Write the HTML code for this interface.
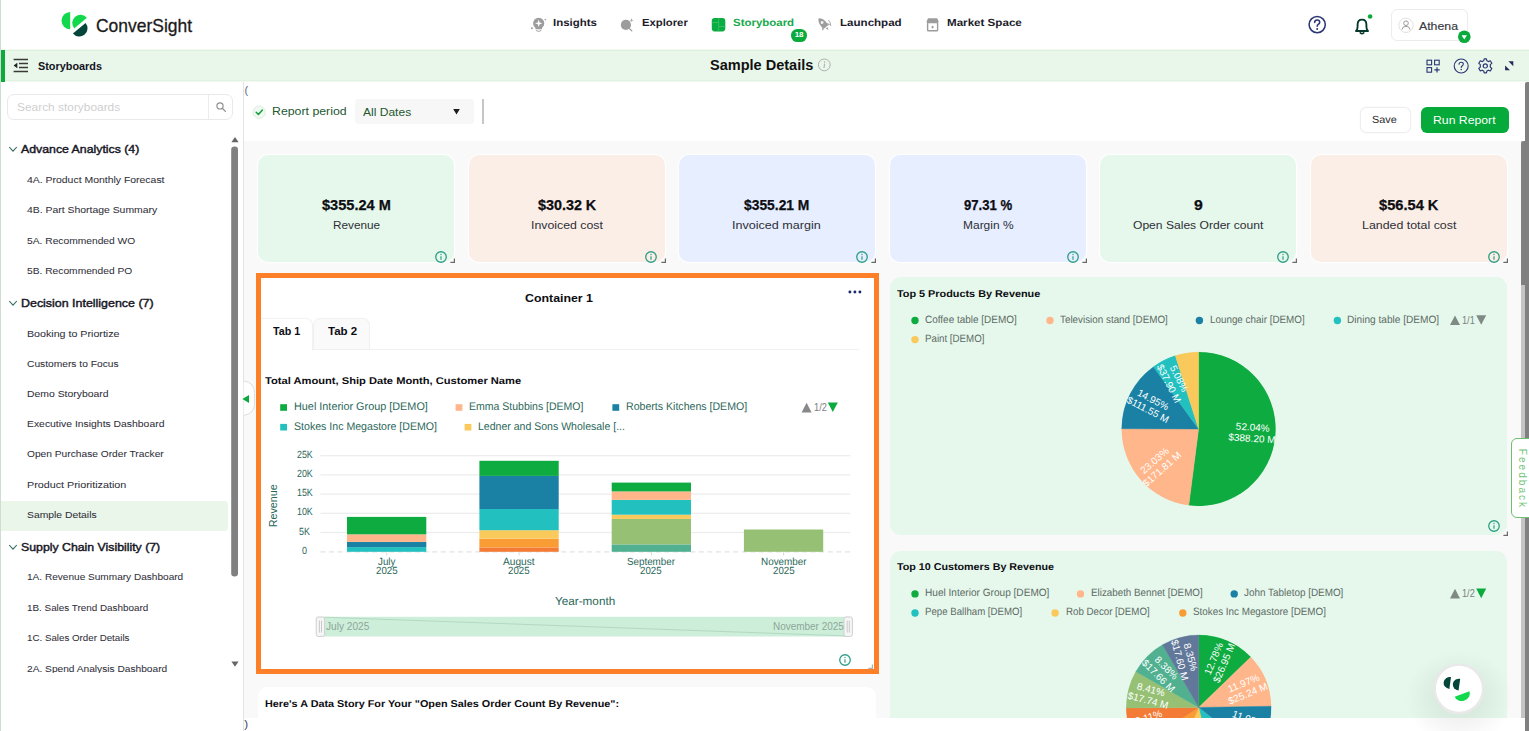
<!DOCTYPE html>
<html><head><meta charset="utf-8"><title>Sample Details</title>
<style>
html,body{margin:0;padding:0;}
body{width:1529px;height:731px;overflow:hidden;background:#fff;font-family:"Liberation Sans",sans-serif;}
#app{position:relative;width:1529px;height:731px;overflow:hidden;background:#fff;}
.t{position:absolute;white-space:nowrap;font-family:"Liberation Sans",sans-serif;}
.a{position:absolute;}
svg{position:absolute;overflow:visible;}

</style></head>
<body>
<div id="app">
<div class="a" style="left:0;top:0;width:1529px;height:50px;background:#fff"></div>
<div class="a" style="left:0;top:49.2px;width:1529px;height:32.6px;background:#f1f9f1"></div>
<div class="a" style="left:0;top:50px;width:1529px;height:31.2px;background:#e9f6ea"></div>
<div class="a" style="left:0;top:50px;width:1529px;height:1px;background:#ddefde"></div>
<div class="a" style="left:0;top:80.1px;width:1529px;height:1px;background:#e1f2e2"></div>
<div class="a" style="left:1px;top:49.8px;width:4px;height:31.8px;background:#0ca93c"></div>
<svg style="left:55px;top:5px" width="40" height="40" viewBox="55 5 40 40">
<path d="M70.2 11.9 A8.7 8.7 0 0 0 70.2 29.3 Z" fill="#12d94c"/>
<path d="M74.2 28.4 A8.2 8.2 0 0 1 86.9 17.7 Z" fill="#12d94c"/>
<path d="M85.6 22.9 A8.2 8.2 0 0 1 72.9 33.6 Z" fill="#04473a"/>
</svg>
<span class="t" style="left:96.20px;top:14.30px;font-size:18.2px;line-height:24px;color:#1b1b1b;transform:scale(0.9596,1);transform-origin:0 50%;-webkit-text-stroke:.3px #1b1b1b;">ConverSight</span>
<svg style="left:528px;top:14px" width="22" height="22" viewBox="528 14 22 22">
<path d="M535.6 29.2 L535.2 27.6 A5.6 5.6 0 1 1 542.2 27.6 L541.8 29.2 Z" fill="#9c9c9c"/>
<path d="M536.6 30.6 Q538.7 31.9 540.8 30.6" stroke="#9c9c9c" stroke-width="1.1" fill="none" stroke-linecap="round"/>
<path d="M538.7 19.6 L539.6 22.4 L542.4 23.3 L539.6 24.2 L538.7 27 L537.8 24.2 L535 23.3 L537.8 22.4 Z" fill="#fff"/>
<circle cx="531.9" cy="28.2" r=".95" fill="#9c9c9c"/><circle cx="545.3" cy="19.6" r=".8" fill="#9c9c9c"/>
</svg>
<span class="t" style="left:553.20px;top:17.10px;font-size:10.3px;line-height:13px;color:#1c1c2b;font-weight:700;transform:scale(1.1093,1);transform-origin:0 50%;text-rendering:geometricPrecision;">Insights</span>
<svg style="left:616px;top:14px" width="22" height="22" viewBox="616 14 22 22">
<circle cx="625.9" cy="24.9" r="5.1" fill="#9c9c9c"/>
<path d="M629.4 28.6 L631.8 30.8" stroke="#9c9c9c" stroke-width="1.2" stroke-linecap="round"/>
<path d="M631.6 17.9 L632.1 19.7 L633.9 20.2 L632.1 20.7 L631.6 22.5 L631.1 20.7 L629.3 20.2 L631.1 19.7 Z" fill="#a4a4a4"/>
</svg>
<span class="t" style="left:642.40px;top:17.10px;font-size:10.3px;line-height:13px;color:#1c1c2b;font-weight:700;transform:scale(1.0961,1);transform-origin:0 50%;text-rendering:geometricPrecision;">Explorer</span>
<svg style="left:708px;top:14px" width="22" height="22" viewBox="708 14 22 22">
<rect x="711.8" y="17.9" width="13.5" height="13.5" rx="2.8" fill="#0aad41"/>
<path d="M718.7 17.9 V31.4 M711.8 22.6 H718.7 M718.7 26.5 H725.3" stroke="#46c76e" stroke-width=".7"/>
</svg>
<span class="t" style="left:733.20px;top:17.10px;font-size:10.3px;line-height:13px;color:#16aa49;font-weight:700;transform:scale(1.1122,1);transform-origin:0 50%;text-rendering:geometricPrecision;">Storyboard</span>
<div class="a" style="left:791px;top:28.8px;width:16.2px;height:12.8px;border-radius:6.4px;background:#0aab3c"></div>
<span class="t" style="left:794.65px;top:30.40px;font-size:8px;line-height:10px;color:#fff;font-weight:700;">18</span>
<svg style="left:814px;top:14px" width="22" height="22" viewBox="814 14 22 22">
<g transform="rotate(-40 823.4 24)">
<path d="M823.4 16.6 C826.9 19.2 827.2 24.2 826.2 28 H820.6 C819.6 24.2 819.9 19.2 823.4 16.6 Z" fill="#9c9c9c"/>
<path d="M820.4 25 L818.2 28.6 L820.8 28.2 Z M826.4 25 L828.6 28.6 L826 28.2 Z" fill="#a8a8a8"/>
<path d="M822.2 29 L823.4 32 L824.6 29 Z" fill="#a8a8a8"/>
<circle cx="823.4" cy="22" r="1.45" fill="#f4f4f4"/>
</g>
<path d="M828.6 20.4 Q830.9 22.6 830.8 25.6" stroke="#a8a8a8" stroke-width="1" fill="none" stroke-linecap="round"/>
</svg>
<span class="t" style="left:839.50px;top:17.10px;font-size:10.3px;line-height:13px;color:#1c1c2b;font-weight:700;transform:scale(1.1232,1);transform-origin:0 50%;text-rendering:geometricPrecision;">Launchpad</span>
<svg style="left:922px;top:14px" width="22" height="22" viewBox="922 14 22 22">
<path d="M928 18.2 H937.2 L938.6 21.4 Q938.6 23.2 937 23.2 H928.2 Q926.6 23.2 926.6 21.4 Z" fill="#9c9c9c"/>
<rect x="927.6" y="22.6" width="10" height="8.2" rx=".9" fill="#fff" stroke="#9c9c9c" stroke-width="1.4"/>
<path d="M932.6 25.8 V28.4 M931.3 27.1 H933.9" stroke="#9a9a9a" stroke-width="1"/>
</svg>
<span class="t" style="left:946.80px;top:17.10px;font-size:10.3px;line-height:13px;color:#1c1c2b;font-weight:700;transform:scale(1.1264,1);transform-origin:0 50%;text-rendering:geometricPrecision;">Market Space</span>
<svg style="left:1305px;top:12px" width="24" height="24" viewBox="1305 12 24 24">
<circle cx="1317.2" cy="24.6" r="8.1" fill="none" stroke="#2c3673" stroke-width="1.55"/>
<path d="M1314.6 22.4 Q1314.7 20 1317.2 20 Q1319.7 20 1319.7 22.2 Q1319.7 23.6 1318.2 24.4 Q1317.2 25 1317.2 26.3" stroke="#2c3673" stroke-width="1.55" fill="none" stroke-linecap="round"/>
<circle cx="1317.2" cy="28.9" r="1" fill="#2c3673"/>
</svg>
<svg style="left:1350px;top:10px" width="26" height="28" viewBox="1350 10 26 28">
<path d="M1356 31 Q1357.6 29.4 1357.6 26.4 V24.4 Q1357.6 19.6 1362 19.6 Q1366.4 19.6 1366.4 24.4 V26.4 Q1366.4 29.4 1368 31 Z" fill="none" stroke="#05382c" stroke-width="1.85" stroke-linejoin="round"/>
<path d="M1360.3 32.8 Q1362 34.3 1363.7 32.8" stroke="#05382c" stroke-width="1.7" fill="none" stroke-linecap="round"/>
<circle cx="1370.1" cy="16.5" r="2.3" fill="#0aab3c"/>
</svg>
<div class="a" style="left:1391px;top:9px;width:75px;height:30px;border:1px solid #ececec;border-radius:6px;background:#fff"></div>
<svg style="left:1396px;top:15px" width="20" height="20" viewBox="1396 15 20 20">
<circle cx="1406" cy="25.3" r="7.2" fill="#fff" stroke="#e2e2e2" stroke-width="1"/>
<circle cx="1406" cy="23.2" r="2.3" fill="none" stroke="#9a9a9a" stroke-width="1"/>
<path d="M1402 29.6 Q1402.4 26.3 1406 26.3 Q1409.6 26.3 1410 29.6" fill="none" stroke="#9a9a9a" stroke-width="1"/>
</svg>
<span class="t" style="left:1418.50px;top:20.00px;font-size:10px;line-height:13px;color:#3a3a44;transform:scale(1.2303,1);transform-origin:0 50%;-webkit-text-stroke:.15px #3a3a44;">Athena</span>
<svg style="left:1456px;top:29px" width="16" height="16" viewBox="1456 29 16 16">
<circle cx="1464.3" cy="36.8" r="6.3" fill="#0aab3c"/>
<path d="M1461.6 35.2 H1467 L1464.3 39.4 Z" fill="#fff"/>
</svg>
<svg style="left:12px;top:57px" width="20" height="18" viewBox="12 57 20 18">
<path d="M13.6 59.6 H28 M19 63.6 H28 M19 67.4 H28 M13.6 71.4 H28" stroke="#3a3a3a" stroke-width="1.5"/>
<path d="M17.3 62.7 V68.3 L13.6 65.5 Z" fill="#222"/>
</svg>
<span class="t" style="left:38.00px;top:59.50px;font-size:10.3px;line-height:13px;color:#14141e;font-weight:700;transform:scale(1.0550,1);transform-origin:0 50%;">Storyboards</span>
<span class="t" style="left:709.80px;top:56.00px;font-size:13.9px;line-height:18px;color:#111;font-weight:700;transform:scale(1.0456,1);transform-origin:0 50%;">Sample Details</span>
<svg style="left:816px;top:57px" width="16" height="16" viewBox="816 57 16 16">
<circle cx="824.3" cy="64.9" r="5.9" fill="none" stroke="#a9a9a9" stroke-width=".9"/>
<path d="M824.5 63.6 L824 68" stroke="#a9a9a9" stroke-width="1"/><circle cx="824.7" cy="62" r=".7" fill="#a9a9a9"/>
</svg>
<svg style="left:1422px;top:56px" width="100" height="20" viewBox="1422 56 100 20">
<rect x="1427" y="60.2" width="4.6" height="4.6" fill="none" stroke="#2c3673" stroke-width="1.1"/>
<rect x="1434.6" y="60.2" width="4.6" height="4.6" fill="none" stroke="#2c3673" stroke-width="1.1"/>
<rect x="1427" y="67.6" width="4.6" height="4.6" fill="none" stroke="#2c3673" stroke-width="1.1"/>
<path d="M1437 67.2 V72.6 M1434.3 69.9 H1439.7" stroke="#2c3673" stroke-width="1.2"/>
<circle cx="1461.2" cy="66" r="7" fill="none" stroke="#2c3673" stroke-width="1.1"/>
<path d="M1459 64.2 Q1459.1 62.2 1461.2 62.2 Q1463.3 62.2 1463.3 64 Q1463.3 65.2 1462.1 65.9 Q1461.2 66.4 1461.2 67.5" stroke="#2c3673" stroke-width="1.1" fill="none" stroke-linecap="round"/>
<circle cx="1461.2" cy="69.6" r=".75" fill="#2c3673"/>
<g transform="translate(1485.3 65.9)">
<circle r="2.1" fill="none" stroke="#2c3673" stroke-width="1.2"/>
<path d="M-1.1 -7 H1.1 L1.6 -5.1 L3.1 -4.3 L5 -5.1 L6.5 -2.6 L5 -1.2 V1.2 L6.5 2.6 L5 5.1 L3.1 4.3 L1.6 5.1 L1.1 7 H-1.1 L-1.6 5.1 L-3.1 4.3 L-5 5.1 L-6.5 2.6 L-5 1.2 V-1.2 L-6.5 -2.6 L-5 -5.1 L-3.1 -4.3 L-1.6 -5.1 Z" fill="none" stroke="#2c3673" stroke-width="1.15" stroke-linejoin="round"/>
</g>
<path d="M1508.4 61.3 H1513.3 V66.2 Z M1510 70.3 H1505.1 V65.4 Z" fill="#222a5e"/>
</svg>
<div class="a" style="left:0;top:0;width:1.3px;height:731px;background:#cfdccf"></div>
<div class="a" style="left:243px;top:81.5px;width:1px;height:650px;background:#e3e3e3"></div>
<div class="a" style="left:7.4px;top:94.4px;width:223.6px;height:23.3px;border:1px solid #e9e9e9;border-radius:7px;background:#fff"></div>
<div class="a" style="left:208px;top:95.4px;width:1px;height:23.3px;background:#ececec"></div>
<span class="t" style="left:17.20px;top:101.10px;font-size:10.2px;line-height:13px;color:#cfcfcf;transform:scale(1.1681,1);transform-origin:0 50%;">Search storyboards</span>
<svg style="left:212px;top:99px" width="18" height="18" viewBox="212 99 18 18">
<circle cx="220" cy="105.9" r="3.1" fill="none" stroke="#8e8e8e" stroke-width="1.15"/>
<path d="M222.3 108.3 L225.4 111.4" stroke="#8e8e8e" stroke-width="1.25" stroke-linecap="round"/>
</svg>
<div class="a" style="left:1.3px;top:500.5px;width:227px;height:30px;background:#eaf6ea;border-radius:0 4px 4px 0"></div>
<svg style="left:8px;top:144.2px" width="10" height="10" viewBox="0 0 10 10"><path d="M1.2 3 L5 7.2 L8.8 3" fill="none" stroke="#2f6b57" stroke-width="1.1"/></svg>
<span class="t" style="left:21.00px;top:142.20px;font-size:10.5px;line-height:14px;color:#15151f;transform:scale(1.1716,1);transform-origin:0 50%;-webkit-text-stroke:.4px #15151f;">Advance Analytics (4)</span>
<svg style="left:8px;top:297.5px" width="10" height="10" viewBox="0 0 10 10"><path d="M1.2 3 L5 7.2 L8.8 3" fill="none" stroke="#2f6b57" stroke-width="1.1"/></svg>
<span class="t" style="left:21.00px;top:295.50px;font-size:10.5px;line-height:14px;color:#15151f;transform:scale(1.1834,1);transform-origin:0 50%;-webkit-text-stroke:.4px #15151f;">Decision Intelligence (7)</span>
<svg style="left:8px;top:541.7px" width="10" height="10" viewBox="0 0 10 10"><path d="M1.2 3 L5 7.2 L8.8 3" fill="none" stroke="#2f6b57" stroke-width="1.1"/></svg>
<span class="t" style="left:21.00px;top:539.70px;font-size:10.5px;line-height:14px;color:#15151f;transform:scale(1.1712,1);transform-origin:0 50%;-webkit-text-stroke:.4px #15151f;">Supply Chain Visibility (7)</span>
<span class="t" style="left:26.60px;top:173.90px;font-size:9.2px;line-height:12px;color:#30303a;transform:scale(1.1362,1);transform-origin:0 50%;-webkit-text-stroke:.05px #30303a;">4A. Product Monthly Forecast</span>
<span class="t" style="left:26.60px;top:204.40px;font-size:9.2px;line-height:12px;color:#30303a;transform:scale(1.1334,1);transform-origin:0 50%;-webkit-text-stroke:.05px #30303a;">4B. Part Shortage Summary</span>
<span class="t" style="left:26.60px;top:234.70px;font-size:9.2px;line-height:12px;color:#30303a;transform:scale(1.1158,1);transform-origin:0 50%;-webkit-text-stroke:.05px #30303a;">5A. Recommended WO</span>
<span class="t" style="left:26.60px;top:264.50px;font-size:9.2px;line-height:12px;color:#30303a;transform:scale(1.1141,1);transform-origin:0 50%;-webkit-text-stroke:.05px #30303a;">5B. Recommended PO</span>
<span class="t" style="left:26.60px;top:327.50px;font-size:9.2px;line-height:12px;color:#30303a;transform:scale(1.1608,1);transform-origin:0 50%;-webkit-text-stroke:.05px #30303a;">Booking to Priortize</span>
<span class="t" style="left:26.60px;top:357.80px;font-size:9.2px;line-height:12px;color:#30303a;transform:scale(1.1140,1);transform-origin:0 50%;-webkit-text-stroke:.05px #30303a;">Customers to Focus</span>
<span class="t" style="left:26.60px;top:388.30px;font-size:9.2px;line-height:12px;color:#30303a;transform:scale(1.1331,1);transform-origin:0 50%;-webkit-text-stroke:.05px #30303a;">Demo Storyboard</span>
<span class="t" style="left:26.60px;top:417.70px;font-size:9.2px;line-height:12px;color:#30303a;transform:scale(1.1305,1);transform-origin:0 50%;-webkit-text-stroke:.05px #30303a;">Executive Insights Dashboard</span>
<span class="t" style="left:26.60px;top:448.20px;font-size:9.2px;line-height:12px;color:#30303a;transform:scale(1.1109,1);transform-origin:0 50%;-webkit-text-stroke:.05px #30303a;">Open Purchase Order Tracker</span>
<span class="t" style="left:26.60px;top:478.60px;font-size:9.2px;line-height:12px;color:#30303a;transform:scale(1.1710,1);transform-origin:0 50%;-webkit-text-stroke:.05px #30303a;">Product Prioritization</span>
<span class="t" style="left:26.60px;top:509.00px;font-size:9.2px;line-height:12px;color:#30303a;transform:scale(1.1265,1);transform-origin:0 50%;-webkit-text-stroke:.05px #30303a;">Sample Details</span>
<span class="t" style="left:26.60px;top:571.20px;font-size:9.2px;line-height:12px;color:#30303a;transform:scale(1.0962,1);transform-origin:0 50%;-webkit-text-stroke:.05px #30303a;">1A. Revenue Summary Dashboard</span>
<span class="t" style="left:26.60px;top:601.80px;font-size:9.2px;line-height:12px;color:#30303a;transform:scale(1.0741,1);transform-origin:0 50%;-webkit-text-stroke:.05px #30303a;">1B. Sales Trend Dashboard</span>
<span class="t" style="left:26.60px;top:632.20px;font-size:9.2px;line-height:12px;color:#30303a;transform:scale(1.0617,1);transform-origin:0 50%;-webkit-text-stroke:.05px #30303a;">1C. Sales Order Details</span>
<div class="a" style="left:0;top:655px;width:230px;height:17.6px;overflow:hidden"><span class="t" style="left:26.60px;top:7.60px;font-size:9.2px;line-height:12px;color:#30303a;transform:scale(1.1070,1);transform-origin:0 50%;-webkit-text-stroke:.05px #30303a;">2A. Spend Analysis Dashboard</span></div>
<svg style="left:228px;top:132px" width="14" height="545" viewBox="228 132 14 545">
<path d="M231.4 142.2 L235 137 L238.6 142.2 Z" fill="#666"/>
<rect x="231.2" y="146.6" width="6.8" height="430" rx="3.3" fill="#808080"/>
<path d="M231.4 661.6 L235 666.8 L238.6 661.6 Z" fill="#666"/>
</svg>
<span class="t" style="left:244.40px;top:82.50px;font-size:11px;line-height:14px;color:#5a6688;">(</span>
<span class="t" style="left:244.20px;top:717.00px;font-size:11.5px;line-height:15px;color:#33416b;">)</span>
<svg style="left:250px;top:103px" width="18" height="18" viewBox="250 103 18 18">
<circle cx="259.2" cy="112.2" r="6.2" fill="#f1f8f2" stroke="#dcefe0" stroke-width="1"/>
<path d="M256.2 112.3 L258.4 114.5 L262.4 110" fill="none" stroke="#12a03c" stroke-width="1.5" stroke-linecap="round" stroke-linejoin="round"/>
</svg>
<span class="t" style="left:272.30px;top:104.20px;font-size:10.6px;line-height:14px;color:#24582f;transform:scale(1.1631,1);transform-origin:0 50%;">Report period</span>
<div class="a" style="left:354.6px;top:99.2px;width:119.6px;height:25.2px;background:#f7f7f7;border-radius:3px"></div>
<span class="t" style="left:363.00px;top:104.50px;font-size:11.2px;line-height:15px;color:#24582f;transform:scale(1.0754,1);transform-origin:0 50%;">All Dates</span>
<svg style="left:451px;top:107px" width="12" height="10" viewBox="451 107 12 10"><path d="M453.2 109 H459.8 L456.5 114.6 Z" fill="#1c1c1c"/></svg>
<div class="a" style="left:482.4px;top:99.2px;width:1.2px;height:25.2px;background:#c6c6c6"></div>
<div class="a" style="left:1359.8px;top:107.3px;width:50.9px;height:25.3px;border:1px solid #ededed;border-radius:6.5px;background:#fff;box-sizing:border-box;box-shadow:0 0 2px rgba(0,0,0,.05)"></div>
<span class="t" style="left:1372.30px;top:114.30px;font-size:10.3px;line-height:13px;color:#2b2b2b;text-rendering:geometricPrecision;transform:scale(1.0565,1);transform-origin:0 50%;">Save</span>
<div class="a" style="left:1421px;top:107px;width:88.2px;height:25.8px;border-radius:6px;background:#05aa3a"></div>
<span class="t" style="left:1433.40px;top:114.00px;font-size:10.1px;line-height:13px;color:#fff;transform:scale(1.2119,1);transform-origin:0 50%;">Run Report</span>
<div class="a" style="left:244px;top:141px;width:1277px;height:577px;background:#f9f9f9"></div>
<div class="a" style="left:258px;top:154.8px;width:196px;height:107.6px;border-radius:10px;background:#e6f8ec;box-shadow:0 0 1.5px .6px rgba(255,255,255,.9)"></div>
<span class="t" style="left:321.80px;top:196.30px;font-size:14px;line-height:18px;color:#0d0d12;font-weight:700;transform:scale(1.0400,1);transform-origin:0 50%;-webkit-text-stroke:.25px #0d0d12;">$355.24 M</span>
<span class="t" style="left:332.60px;top:218.20px;font-size:10.6px;line-height:14px;color:#2e2e36;transform:scale(1.1124,1);transform-origin:0 50%;">Revenue</span>
<svg style="left:432.6px;top:248.7px" width="16" height="16" viewBox="432.6 248.7 16 16"><circle cx="440.6" cy="256.7" r="5.25" fill="none" stroke="#2f9e86" stroke-width="1.3"/><path d="M440.6 255.89999999999998 V259.4" stroke="#2f9e86" stroke-width="1.2"/><circle cx="440.6" cy="254.2" r=".7" fill="#2f9e86"/></svg>
<svg style="left:446.9px;top:254.8px" width="10" height="10" viewBox="446.9 254.8 10 10"><path d="M450.29999999999995 262.2 H454.29999999999995 V258.2" fill="none" stroke="#6a6a6a" stroke-width="1.2"/></svg>
<div class="a" style="left:468.6px;top:154.8px;width:196px;height:107.6px;border-radius:10px;background:#fbeee7;box-shadow:0 0 1.5px .6px rgba(255,255,255,.9)"></div>
<span class="t" style="left:537.60px;top:196.30px;font-size:14px;line-height:18px;color:#0d0d12;font-weight:700;transform:scale(1.0244,1);transform-origin:0 50%;-webkit-text-stroke:.25px #0d0d12;">$30.32 K</span>
<span class="t" style="left:530.60px;top:218.20px;font-size:10.6px;line-height:14px;color:#2e2e36;transform:scale(1.1638,1);transform-origin:0 50%;">Invoiced cost</span>
<svg style="left:643.2px;top:248.7px" width="16" height="16" viewBox="643.2 248.7 16 16"><circle cx="651.2" cy="256.7" r="5.25" fill="none" stroke="#2f9e86" stroke-width="1.3"/><path d="M651.2 255.89999999999998 V259.4" stroke="#2f9e86" stroke-width="1.2"/><circle cx="651.2" cy="254.2" r=".7" fill="#2f9e86"/></svg>
<svg style="left:657.5px;top:254.8px" width="10" height="10" viewBox="657.5 254.8 10 10"><path d="M660.9 262.2 H664.9 V258.2" fill="none" stroke="#6a6a6a" stroke-width="1.2"/></svg>
<div class="a" style="left:679px;top:154.8px;width:196px;height:107.6px;border-radius:10px;background:#e6eeff;box-shadow:0 0 1.5px .6px rgba(255,255,255,.9)"></div>
<span class="t" style="left:744.20px;top:196.30px;font-size:14px;line-height:18px;color:#0d0d12;font-weight:700;transform:scale(0.9886,1);transform-origin:0 50%;-webkit-text-stroke:.25px #0d0d12;">$355.21 M</span>
<span class="t" style="left:732.40px;top:218.20px;font-size:10.6px;line-height:14px;color:#2e2e36;transform:scale(1.1867,1);transform-origin:0 50%;">Invoiced margin</span>
<svg style="left:853.6px;top:248.7px" width="16" height="16" viewBox="853.6 248.7 16 16"><circle cx="861.6" cy="256.7" r="5.25" fill="none" stroke="#2f9e86" stroke-width="1.3"/><path d="M861.6 255.89999999999998 V259.4" stroke="#2f9e86" stroke-width="1.2"/><circle cx="861.6" cy="254.2" r=".7" fill="#2f9e86"/></svg>
<svg style="left:867.9px;top:254.8px" width="10" height="10" viewBox="867.9 254.8 10 10"><path d="M871.3 262.2 H875.3 V258.2" fill="none" stroke="#6a6a6a" stroke-width="1.2"/></svg>
<div class="a" style="left:890px;top:154.8px;width:196px;height:107.6px;border-radius:10px;background:#e6eeff;box-shadow:0 0 1.5px .6px rgba(255,255,255,.9)"></div>
<span class="t" style="left:964.00px;top:196.30px;font-size:14px;line-height:18px;color:#0d0d12;font-weight:700;transform:scale(0.9383,1);transform-origin:0 50%;-webkit-text-stroke:.25px #0d0d12;">97.31 %</span>
<span class="t" style="left:962.80px;top:218.20px;font-size:10.6px;line-height:14px;color:#2e2e36;transform:scale(1.1302,1);transform-origin:0 50%;">Margin %</span>
<svg style="left:1064.6px;top:248.7px" width="16" height="16" viewBox="1064.6 248.7 16 16"><circle cx="1072.6" cy="256.7" r="5.25" fill="none" stroke="#2f9e86" stroke-width="1.3"/><path d="M1072.6 255.89999999999998 V259.4" stroke="#2f9e86" stroke-width="1.2"/><circle cx="1072.6" cy="254.2" r=".7" fill="#2f9e86"/></svg>
<svg style="left:1078.9px;top:254.8px" width="10" height="10" viewBox="1078.9 254.8 10 10"><path d="M1082.3000000000002 262.2 H1086.3000000000002 V258.2" fill="none" stroke="#6a6a6a" stroke-width="1.2"/></svg>
<div class="a" style="left:1100.4px;top:154.8px;width:196px;height:107.6px;border-radius:10px;background:#e6f8ec;box-shadow:0 0 1.5px .6px rgba(255,255,255,.9)"></div>
<span class="t" style="left:1193.80px;top:196.30px;font-size:14px;line-height:18px;color:#0d0d12;font-weight:700;transform:scale(1.1304,1);transform-origin:0 50%;-webkit-text-stroke:.25px #0d0d12;">9</span>
<span class="t" style="left:1133.00px;top:218.20px;font-size:10.6px;line-height:14px;color:#2e2e36;transform:scale(1.1407,1);transform-origin:0 50%;">Open Sales Order count</span>
<svg style="left:1275.0px;top:248.7px" width="16" height="16" viewBox="1275.0 248.7 16 16"><circle cx="1283.0" cy="256.7" r="5.25" fill="none" stroke="#2f9e86" stroke-width="1.3"/><path d="M1283.0 255.89999999999998 V259.4" stroke="#2f9e86" stroke-width="1.2"/><circle cx="1283.0" cy="254.2" r=".7" fill="#2f9e86"/></svg>
<svg style="left:1289.3000000000002px;top:254.8px" width="10" height="10" viewBox="1289.3000000000002 254.8 10 10"><path d="M1292.7000000000003 262.2 H1296.7000000000003 V258.2" fill="none" stroke="#6a6a6a" stroke-width="1.2"/></svg>
<div class="a" style="left:1311px;top:154.8px;width:196px;height:107.6px;border-radius:10px;background:#fbeee7;box-shadow:0 0 1.5px .6px rgba(255,255,255,.9)"></div>
<span class="t" style="left:1379.20px;top:196.30px;font-size:14px;line-height:18px;color:#0d0d12;font-weight:700;transform:scale(1.0455,1);transform-origin:0 50%;-webkit-text-stroke:.25px #0d0d12;">$56.54 K</span>
<span class="t" style="left:1361.60px;top:218.20px;font-size:10.6px;line-height:14px;color:#2e2e36;transform:scale(1.1692,1);transform-origin:0 50%;">Landed total cost</span>
<svg style="left:1485.6px;top:248.7px" width="16" height="16" viewBox="1485.6 248.7 16 16"><circle cx="1493.6" cy="256.7" r="5.25" fill="none" stroke="#2f9e86" stroke-width="1.3"/><path d="M1493.6 255.89999999999998 V259.4" stroke="#2f9e86" stroke-width="1.2"/><circle cx="1493.6" cy="254.2" r=".7" fill="#2f9e86"/></svg>
<svg style="left:1499.9px;top:254.8px" width="10" height="10" viewBox="1499.9 254.8 10 10"><path d="M1503.3000000000002 262.2 H1507.3000000000002 V258.2" fill="none" stroke="#6a6a6a" stroke-width="1.2"/></svg>
<div class="a" style="left:256px;top:273px;width:623px;height:401px;background:#fd7f28"></div>
<div class="a" style="left:261px;top:278px;width:613px;height:391px;background:#fff"></div>
<span class="t" style="left:525.00px;top:290.60px;font-size:11.3px;line-height:15px;color:#0d0d12;font-weight:700;transform:scale(1.0939,1);transform-origin:0 50%;">Container 1</span>
<svg style="left:846px;top:288px" width="18" height="8" viewBox="846 288 18 8"><circle cx="849.9" cy="292" r="1.45" fill="#1b2a6b"/><circle cx="854.9" cy="292" r="1.45" fill="#1b2a6b"/><circle cx="859.9" cy="292" r="1.45" fill="#1b2a6b"/></svg>
<div class="a" style="left:313px;top:349.4px;width:546px;height:1px;background:#f0f0f0"></div>
<div class="a" style="left:261px;top:317.6px;width:52px;height:33px;border:1px solid #f2f2f2;border-left:none;border-bottom:none;border-radius:0 7px 0 0;background:#fff;box-sizing:border-box"></div>
<div class="a" style="left:313px;top:317.6px;width:57px;height:32.4px;border:1px solid #f0f0f0;border-radius:7px 7px 0 0;background:#fafafa;box-sizing:border-box"></div>
<span class="t" style="left:273.00px;top:325.00px;font-size:10.3px;line-height:13px;color:#0d0d12;font-weight:700;transform:scale(1.0408,1);transform-origin:0 50%;">Tab 1</span>
<span class="t" style="left:327.60px;top:325.00px;font-size:10.3px;line-height:13px;color:#0d0d12;font-weight:700;transform:scale(1.1173,1);transform-origin:0 50%;">Tab 2</span>
<span class="t" style="left:265.40px;top:375.00px;font-size:9.8px;line-height:13px;color:#0d0d12;font-weight:700;text-rendering:geometricPrecision;transform:scale(1.1367,1);transform-origin:0 50%;">Total Amount, Ship Date Month, Customer Name</span>
<svg style="left:837.2px;top:651.8px" width="16" height="16" viewBox="837.2 651.8 16 16"><circle cx="845.2" cy="659.8" r="5.25" fill="none" stroke="#2f9e86" stroke-width="1.3"/><path d="M845.2 659.0 V662.5" stroke="#2f9e86" stroke-width="1.2"/><circle cx="845.2" cy="657.3" r=".7" fill="#2f9e86"/></svg>
<svg style="left:865.4px;top:661px" width="10" height="10" viewBox="865.4 661 10 10"><path d="M868.8 668.4 H872.8 V664.4" fill="none" stroke="#b0b0b0" stroke-width="1.2"/></svg>
<div class="a" style="left:258px;top:686.6px;width:618px;height:40px;border-radius:9px;background:#fff"></div>
<span class="t" style="left:265.00px;top:698.30px;font-size:9.9px;line-height:13px;color:#0d0d12;font-weight:700;text-rendering:geometricPrecision;transform:scale(1.0948,1);transform-origin:0 50%;">Here&#39;s A Data Story For Your &quot;Open Sales Order Count By Revenue&quot;:</span>
<div class="a" style="left:890px;top:277px;width:617.4px;height:258.4px;border-radius:11px;background:#e6f8ec"></div>
<span class="t" style="left:896.60px;top:287.90px;font-size:9.9px;line-height:13px;color:#0d0d12;font-weight:700;text-rendering:geometricPrecision;transform:scale(1.0982,1);transform-origin:0 50%;">Top 5 Products By Revenue</span>
<svg style="left:1485.8px;top:518px" width="16" height="16" viewBox="1485.8 518 16 16"><circle cx="1493.8" cy="526" r="5.25" fill="none" stroke="#2f9e86" stroke-width="1.3"/><path d="M1493.8 525.2 V528.7" stroke="#2f9e86" stroke-width="1.2"/><circle cx="1493.8" cy="523.5" r=".7" fill="#2f9e86"/></svg>
<svg style="left:1500.1px;top:528.2px" width="10" height="10" viewBox="1500.1 528.2 10 10"><path d="M1503.5 535.6 H1507.5 V531.6" fill="none" stroke="#6a6a6a" stroke-width="1.2"/></svg>
<div class="a" style="left:890px;top:550.6px;width:617.4px;height:200px;border-radius:11px;background:#e6f8ec"></div>
<span class="t" style="left:896.60px;top:561.30px;font-size:9.9px;line-height:13px;color:#0d0d12;font-weight:700;text-rendering:geometricPrecision;transform:scale(1.0850,1);transform-origin:0 50%;">Top 10 Customers By Revenue</span>
<svg style="left:261px;top:395px" width="613" height="250" viewBox="261 395 613 250">
<rect x="320.4" y="531.90" width="529.8" height="1.2" fill="#ececec"/>
<rect x="320.4" y="512.70" width="529.8" height="1.2" fill="#ececec"/>
<rect x="320.4" y="493.50" width="529.8" height="1.2" fill="#ececec"/>
<rect x="320.4" y="474.30" width="529.8" height="1.2" fill="#ececec"/>
<rect x="320.4" y="455.10" width="529.8" height="1.2" fill="#ececec"/>
<path d="M320.4 551.90 H850.2" stroke="#e4e4e4" stroke-width="1.1" stroke-dasharray="5 3.6"/>
<rect x="347.0" y="547.10" width="79.3" height="4.70" fill="#22c0bf"/>
<rect x="347.0" y="541.90" width="79.3" height="5.20" fill="#1a81a4"/>
<rect x="347.0" y="534.30" width="79.3" height="7.60" fill="#ffb68a"/>
<rect x="347.0" y="516.90" width="79.3" height="17.40" fill="#0dab40"/>
<rect x="386.2" y="552.4" width="1" height="3" fill="#d9d9d9"/>
<rect x="479.4" y="547.40" width="79.3" height="4.40" fill="#f47b36"/>
<rect x="479.4" y="538.70" width="79.3" height="8.70" fill="#f89c33"/>
<rect x="479.4" y="530.20" width="79.3" height="8.50" fill="#f9c95c"/>
<rect x="479.4" y="509.00" width="79.3" height="21.20" fill="#22c0bf"/>
<rect x="479.4" y="475.90" width="79.3" height="33.10" fill="#1a81a4"/>
<rect x="479.4" y="460.80" width="79.3" height="15.10" fill="#0dab40"/>
<rect x="518.6" y="552.4" width="1" height="3" fill="#d9d9d9"/>
<rect x="611.7" y="544.40" width="79.3" height="7.40" fill="#50b090"/>
<rect x="611.7" y="518.90" width="79.3" height="25.50" fill="#96c174"/>
<rect x="611.7" y="514.70" width="79.3" height="4.20" fill="#f9c95c"/>
<rect x="611.7" y="499.90" width="79.3" height="14.80" fill="#22c0bf"/>
<rect x="611.7" y="491.40" width="79.3" height="8.50" fill="#ffb68a"/>
<rect x="611.7" y="482.60" width="79.3" height="8.80" fill="#0dab40"/>
<rect x="650.9" y="552.4" width="1" height="3" fill="#d9d9d9"/>
<rect x="743.9" y="529.50" width="79.3" height="22.30" fill="#96c174"/>
<rect x="783.1" y="552.4" width="1" height="3" fill="#d9d9d9"/>
<rect x="280.2" y="404.2" width="6.8" height="6.6" fill="#0dab40"/>
<rect x="455.6" y="404.2" width="6.8" height="6.6" fill="#ffb68a"/>
<rect x="612.4" y="404.2" width="6.8" height="6.6" fill="#1a81a4"/>
<rect x="280.2" y="423.9" width="6.8" height="6.6" fill="#22c0bf"/>
<rect x="464.6" y="423.9" width="6.8" height="6.6" fill="#f9c95c"/>
<path d="M801.6 412.4 L806.6 402.8 L811.6 412.4 Z" fill="#888"/>
<path d="M827.8 402.4 H837.8 L832.8 412 Z" fill="#0aab3c"/>
<rect x="320" y="616.8" width="530" height="19.7" fill="#cdeed9"/>
<path d="M324.5 617.2 L848 636" stroke="#b4d9c2" stroke-width="1" fill="none"/>
<rect x="316.2" y="617" width="8.4" height="19.4" rx="2" fill="#f6f6f6" stroke="#cfcfcf" stroke-width="1"/>
<path d="M319.4 620.6 V632.6 M321.5 620.6 V632.6" stroke="#c4c4c4" stroke-width=".9"/>
<rect x="844.0" y="617" width="8.4" height="19.4" rx="2" fill="#f6f6f6" stroke="#cfcfcf" stroke-width="1"/>
<path d="M847.2 620.6 V632.6 M849.3 620.6 V632.6" stroke="#c4c4c4" stroke-width=".9"/>
<text transform="translate(276.8 505.8) rotate(-90)" text-anchor="middle" font-family="Liberation Sans, sans-serif" font-size="11.6" fill="#2a675a" textLength="43" lengthAdjust="spacingAndGlyphs">Revenue</text>
</svg>
<span class="t" style="left:302.20px;top:544.70px;font-size:10.4px;line-height:14px;color:#2a675a;text-rendering:geometricPrecision;transform:scale(0.8644,1);transform-origin:0 50%;">0</span>
<span class="t" style="left:299.25px;top:525.70px;font-size:10.4px;line-height:14px;color:#2a675a;text-rendering:geometricPrecision;transform:scale(0.8568,1);transform-origin:0 50%;">5K</span>
<span class="t" style="left:297.00px;top:505.70px;font-size:10.4px;line-height:14px;color:#2a675a;text-rendering:geometricPrecision;transform:scale(0.8538,1);transform-origin:0 50%;">10K</span>
<span class="t" style="left:297.00px;top:486.70px;font-size:10.4px;line-height:14px;color:#2a675a;text-rendering:geometricPrecision;transform:scale(0.8538,1);transform-origin:0 50%;">15K</span>
<span class="t" style="left:297.00px;top:467.70px;font-size:10.4px;line-height:14px;color:#2a675a;text-rendering:geometricPrecision;transform:scale(0.8538,1);transform-origin:0 50%;">20K</span>
<span class="t" style="left:297.00px;top:448.70px;font-size:10.4px;line-height:14px;color:#2a675a;text-rendering:geometricPrecision;transform:scale(0.8538,1);transform-origin:0 50%;">25K</span>
<span class="t" style="left:378.20px;top:555.70px;font-size:10.4px;line-height:14px;color:#2a675a;text-rendering:geometricPrecision;transform:scale(0.9408,1);transform-origin:0 50%;">July</span>
<span class="t" style="left:376.10px;top:565.30px;font-size:10.4px;line-height:14px;color:#2a675a;text-rendering:geometricPrecision;transform:scale(0.9336,1);transform-origin:0 50%;">2025</span>
<span class="t" style="left:503.40px;top:555.70px;font-size:10.4px;line-height:14px;color:#2a675a;text-rendering:geometricPrecision;transform:scale(0.9759,1);transform-origin:0 50%;">August</span>
<span class="t" style="left:508.40px;top:565.30px;font-size:10.4px;line-height:14px;color:#2a675a;text-rendering:geometricPrecision;transform:scale(0.9336,1);transform-origin:0 50%;">2025</span>
<span class="t" style="left:627.20px;top:555.70px;font-size:10.4px;line-height:14px;color:#2a675a;text-rendering:geometricPrecision;transform:scale(0.9435,1);transform-origin:0 50%;">September</span>
<span class="t" style="left:640.40px;top:565.30px;font-size:10.4px;line-height:14px;color:#2a675a;text-rendering:geometricPrecision;transform:scale(0.9336,1);transform-origin:0 50%;">2025</span>
<span class="t" style="left:760.80px;top:555.70px;font-size:10.4px;line-height:14px;color:#2a675a;text-rendering:geometricPrecision;transform:scale(0.9505,1);transform-origin:0 50%;">November</span>
<span class="t" style="left:772.80px;top:565.30px;font-size:10.4px;line-height:14px;color:#2a675a;text-rendering:geometricPrecision;transform:scale(0.9336,1);transform-origin:0 50%;">2025</span>
<span class="t" style="left:555.20px;top:593.90px;font-size:11.6px;line-height:15px;color:#2a675a;text-rendering:geometricPrecision;transform:scale(1.0112,1);transform-origin:0 50%;">Year-month</span>
<span class="t" style="left:293.70px;top:400.20px;font-size:11.1px;line-height:14px;color:#2a675a;text-rendering:geometricPrecision;transform:scale(0.9778,1);transform-origin:0 50%;">Huel Interior Group [DEMO]</span>
<span class="t" style="left:468.70px;top:400.20px;font-size:11.1px;line-height:14px;color:#2a675a;text-rendering:geometricPrecision;transform:scale(0.9471,1);transform-origin:0 50%;">Emma Stubbins [DEMO]</span>
<span class="t" style="left:625.70px;top:400.20px;font-size:11.1px;line-height:14px;color:#2a675a;text-rendering:geometricPrecision;transform:scale(0.9538,1);transform-origin:0 50%;">Roberts Kitchens [DEMO]</span>
<span class="t" style="left:293.70px;top:419.90px;font-size:11.1px;line-height:14px;color:#2a675a;text-rendering:geometricPrecision;transform:scale(0.9547,1);transform-origin:0 50%;">Stokes Inc Megastore [DEMO]</span>
<span class="t" style="left:477.80px;top:419.90px;font-size:11.1px;line-height:14px;color:#2a675a;text-rendering:geometricPrecision;transform:scale(0.9492,1);transform-origin:0 50%;">Ledner and Sons Wholesale [...</span>
<span class="t" style="left:813.90px;top:400.90px;font-size:10.2px;line-height:13px;color:#7d7d7d;transform:scale(0.9100,1);transform-origin:0 50%;">1/2</span>
<span class="t" style="left:326.20px;top:619.50px;font-size:10px;line-height:13px;color:#8ea699;transform:scale(1.0137,1);transform-origin:0 50%;">July 2025</span>
<span class="t" style="left:772.60px;top:619.50px;font-size:10px;line-height:13px;color:#8ea699;transform:scale(0.9949,1);transform-origin:0 50%;">November 2025</span>
<svg style="left:1110px;top:345px;overflow:hidden" width="176" height="170" viewBox="1110 345 176 170"><defs><clipPath id="c1"><circle cx="1198.6" cy="429" r="77.3"/></clipPath></defs><g clip-path="url(#c1)"><path d="M1198.6 429 L1198.60 352.00 A77 77 0 1 1 1188.76 505.37 Z" fill="#0dab40" stroke="#0dab40" stroke-width=".4"/>
<path d="M1198.6 429 L1188.76 505.37 A77 77 0 0 1 1121.60 428.66 Z" fill="#ffb68a" stroke="#ffb68a" stroke-width=".4"/>
<path d="M1198.6 429 L1121.60 428.66 A77 77 0 0 1 1153.42 366.65 Z" fill="#1a81a4" stroke="#1a81a4" stroke-width=".4"/>
<path d="M1198.6 429 L1153.42 366.65 A77 77 0 0 1 1175.27 355.62 Z" fill="#22c0bf" stroke="#22c0bf" stroke-width=".4"/>
<path d="M1198.6 429 L1175.27 355.62 A77 77 0 0 1 1198.60 352.00 Z" fill="#f9c95c" stroke="#f9c95c" stroke-width=".4"/>
<g transform="translate(1252.39 432.45) rotate(3.67)" font-family="Liberation Sans, sans-serif" font-size="10.0" fill="#fff" text-anchor="middle"><text y="-1.8">52.04%</text><text y="9.4">$388.20 M</text></g>
<g transform="translate(1158.05 464.50) rotate(-41.20)" font-family="Liberation Sans, sans-serif" font-size="10.0" fill="#fff" text-anchor="middle"><text y="-1.8">23.03%</text><text y="9.4">$171.81 M</text></g>
<g transform="translate(1150.64 404.39) rotate(27.16)" font-family="Liberation Sans, sans-serif" font-size="10.0" fill="#fff" text-anchor="middle"><text y="-1.8">14.95%</text><text y="9.4">$111.55 M</text></g>
<g transform="translate(1174.31 380.88) rotate(63.22)" font-family="Liberation Sans, sans-serif" font-size="10.0" fill="#fff" text-anchor="middle"><text y="-1.8">5.08%</text><text y="9.4">$37.90 M</text></g></g></svg>
<svg style="left:1110px;top:625px;overflow:hidden" width="176" height="93" viewBox="1110 625 176 93"><defs><clipPath id="c2"><circle cx="1198.7" cy="707.4" r="72.8"/></clipPath></defs><g clip-path="url(#c2)"><path d="M1198.7 707.4 L1198.70 634.90 A72.5 72.5 0 0 1 1250.86 657.04 Z" fill="#0dab40" stroke="#0dab40" stroke-width=".4"/>
<path d="M1198.7 707.4 L1250.86 657.04 A72.5 72.5 0 0 1 1271.19 706.26 Z" fill="#ffb68a" stroke="#ffb68a" stroke-width=".4"/>
<path d="M1198.7 707.4 L1271.19 706.26 A72.5 72.5 0 0 1 1255.14 752.91 Z" fill="#1a81a4" stroke="#1a81a4" stroke-width=".4"/>
<path d="M1198.7 707.4 L1255.14 752.91 A72.5 72.5 0 0 1 1214.96 778.05 Z" fill="#22c0bf" stroke="#22c0bf" stroke-width=".4"/>
<path d="M1198.7 707.4 L1214.96 778.05 A72.5 72.5 0 0 1 1170.33 774.12 Z" fill="#f9c95c" stroke="#f9c95c" stroke-width=".4"/>
<path d="M1198.7 707.4 L1170.33 774.12 A72.5 72.5 0 0 1 1138.10 747.20 Z" fill="#f89c33" stroke="#f89c33" stroke-width=".4"/>
<path d="M1198.7 707.4 L1138.10 747.20 A72.5 72.5 0 0 1 1126.20 708.04 Z" fill="#f47b36" stroke="#f47b36" stroke-width=".4"/>
<path d="M1198.7 707.4 L1126.20 708.04 A72.5 72.5 0 0 1 1135.77 671.40 Z" fill="#96c174" stroke="#96c174" stroke-width=".4"/>
<path d="M1198.7 707.4 L1135.77 671.40 A72.5 72.5 0 0 1 1162.38 644.65 Z" fill="#50b090" stroke="#50b090" stroke-width=".4"/>
<path d="M1198.7 707.4 L1162.38 644.65 A72.5 72.5 0 0 1 1198.75 634.90 Z" fill="#62789a" stroke="#62789a" stroke-width=".4"/>
<g transform="translate(1218.53 660.69) rotate(-67.00)" font-family="Liberation Sans, sans-serif" font-size="10.0" fill="#fff" text-anchor="middle"><text y="-1.8">12.78%</text><text y="9.4">$26.95 M</text></g>
<g transform="translate(1245.61 688.02) rotate(-22.45)" font-family="Liberation Sans, sans-serif" font-size="10.0" fill="#fff" text-anchor="middle"><text y="-1.8">11.97%</text><text y="9.4">$25.24 M</text></g>
<g transform="translate(1246.69 723.91) rotate(18.99)" font-family="Liberation Sans, sans-serif" font-size="10.0" fill="#fff" text-anchor="middle"><text y="-1.8">11.05%</text><text y="9.4">$23.30 M</text></g>
<g transform="translate(1150.14 722.15) rotate(-16.90)" font-family="Liberation Sans, sans-serif" font-size="10.0" fill="#fff" text-anchor="middle"><text y="-1.8">9.11%</text><text y="9.4">$19.21 M</text></g>
<g transform="translate(1149.60 694.58) rotate(14.63)" font-family="Liberation Sans, sans-serif" font-size="10.0" fill="#fff" text-anchor="middle"><text y="-1.8">8.41%</text><text y="9.4">$17.74 M</text></g>
<g transform="translate(1162.72 671.60) rotate(44.86)" font-family="Liberation Sans, sans-serif" font-size="10.0" fill="#fff" text-anchor="middle"><text y="-1.8">8.38%</text><text y="9.4">$17.66 M</text></g>
<g transform="translate(1185.55 658.38) rotate(74.99)" font-family="Liberation Sans, sans-serif" font-size="10.0" fill="#fff" text-anchor="middle"><text y="-1.8">8.35%</text><text y="9.4">$17.60 M</text></g></g></svg>
<svg style="left:890px;top:277px" width="617" height="441" viewBox="890 277 617 441"><circle cx="915.0" cy="320.5" r="3.7" fill="#0dab40"/><circle cx="1050.0" cy="320.5" r="3.7" fill="#ffb68a"/><circle cx="1199.4" cy="320.5" r="3.7" fill="#1a81a4"/><circle cx="1337.4" cy="320.5" r="3.7" fill="#22c0bf"/><circle cx="915.0" cy="339.6" r="3.7" fill="#f9c95c"/><circle cx="915.0" cy="593.9" r="3.7" fill="#0dab40"/><circle cx="1080.5" cy="593.9" r="3.7" fill="#ffb68a"/><circle cx="1234.2" cy="593.9" r="3.7" fill="#1a81a4"/><circle cx="915.0" cy="613.0" r="3.7" fill="#22c0bf"/><circle cx="1055.1" cy="613.0" r="3.7" fill="#f9c95c"/><circle cx="1182.8" cy="613.0" r="3.7" fill="#f89c33"/></svg>
<span class="t" style="left:925.00px;top:313.00px;font-size:10.6px;line-height:14px;color:#5d6b65;text-rendering:geometricPrecision;transform:scale(0.9405,1);transform-origin:0 50%;">Coffee table [DEMO]</span>
<span class="t" style="left:1060.00px;top:313.00px;font-size:10.6px;line-height:14px;color:#5d6b65;text-rendering:geometricPrecision;transform:scale(0.9297,1);transform-origin:0 50%;">Television stand [DEMO]</span>
<span class="t" style="left:1209.80px;top:313.00px;font-size:10.6px;line-height:14px;color:#5d6b65;text-rendering:geometricPrecision;transform:scale(0.9291,1);transform-origin:0 50%;">Lounge chair [DEMO]</span>
<span class="t" style="left:1347.30px;top:313.00px;font-size:10.6px;line-height:14px;color:#5d6b65;text-rendering:geometricPrecision;transform:scale(0.9543,1);transform-origin:0 50%;">Dining table [DEMO]</span>
<span class="t" style="left:925.00px;top:332.20px;font-size:10.6px;line-height:14px;color:#5d6b65;text-rendering:geometricPrecision;transform:scale(0.9182,1);transform-origin:0 50%;">Paint [DEMO]</span>
<span class="t" style="left:925.00px;top:586.40px;font-size:10.6px;line-height:14px;color:#5d6b65;text-rendering:geometricPrecision;transform:scale(0.9520,1);transform-origin:0 50%;">Huel Interior Group [DEMO]</span>
<span class="t" style="left:1091.00px;top:586.40px;font-size:10.6px;line-height:14px;color:#5d6b65;text-rendering:geometricPrecision;transform:scale(0.9248,1);transform-origin:0 50%;">Elizabeth Bennet [DEMO]</span>
<span class="t" style="left:1244.20px;top:586.40px;font-size:10.6px;line-height:14px;color:#5d6b65;text-rendering:geometricPrecision;transform:scale(0.9337,1);transform-origin:0 50%;">John Tabletop [DEMO]</span>
<span class="t" style="left:925.00px;top:605.20px;font-size:10.6px;line-height:14px;color:#5d6b65;text-rendering:geometricPrecision;transform:scale(0.9125,1);transform-origin:0 50%;">Pepe Ballham [DEMO]</span>
<span class="t" style="left:1065.50px;top:605.20px;font-size:10.6px;line-height:14px;color:#5d6b65;text-rendering:geometricPrecision;transform:scale(0.9167,1);transform-origin:0 50%;">Rob Decor [DEMO]</span>
<span class="t" style="left:1192.80px;top:605.20px;font-size:10.6px;line-height:14px;color:#5d6b65;text-rendering:geometricPrecision;transform:scale(0.9290,1);transform-origin:0 50%;">Stokes Inc Megastore [DEMO]</span>
<svg style="left:1445px;top:312px" width="46" height="16" viewBox="1445 312 46 16">
<path d="M1450 325 L1455 315.4 L1460 325 Z" fill="#7f8a84"/><path d="M1476.2 315.2 H1486.2 L1481.2 324.8 Z" fill="#7f8a84"/></svg>
<span class="t" style="left:1462.20px;top:313.50px;font-size:10.2px;line-height:13px;color:#78837d;transform:scale(0.9029,1);transform-origin:0 50%;">1/1</span>
<svg style="left:1445px;top:585px" width="46" height="16" viewBox="1445 585 46 16">
<path d="M1450 598.4 L1455 588.8 L1460 598.4 Z" fill="#7f8a84"/><path d="M1476.2 588.6 H1486.2 L1481.2 598.2 Z" fill="#0aab3c"/></svg>
<span class="t" style="left:1462.20px;top:587.10px;font-size:10.2px;line-height:13px;color:#78837d;transform:scale(0.9029,1);transform-origin:0 50%;">1/2</span>
<div class="a" style="left:244px;top:718px;width:1285px;height:13px;background:#fff"></div>
<span class="t" style="left:244.20px;top:717.00px;font-size:11.5px;line-height:15px;color:#33416b;">)</span>
<div class="a" style="left:1521px;top:141px;width:8px;height:577px;background:#c4c4c4"></div>
<div class="a" style="left:1521px;top:141px;width:8px;height:144px;background:#808080;border-radius:3px 0 0 0"></div>
<div class="a" style="left:1525px;top:82px;width:4px;height:649px;background:#808080;border-radius:2px 0 0 0"></div>
<div class="a" style="left:1511px;top:438.2px;width:24px;height:79.6px;border:1.2px solid #6cc070;border-radius:6px;background:#fff;box-sizing:border-box"></div>
<span class="t" style="left:1522.4px;top:478.8px;font-size:10.1px;line-height:12px;color:#73c476;letter-spacing:2px;transform:translate(-50%,-50%) rotate(90deg);">Feedback</span>
<svg style="left:1400px;top:630px;overflow:hidden" width="120" height="101" viewBox="1400 630 120 101">
<defs><radialGradient id="sh" cx="50%" cy="50%" r="50%"><stop offset="40%" stop-color="#000" stop-opacity=".055"/><stop offset="100%" stop-color="#000" stop-opacity="0"/></radialGradient></defs>
<ellipse cx="1459" cy="698" rx="54" ry="48" fill="url(#sh)"/>
<circle cx="1458.9" cy="688.9" r="25.5" fill="#e9e9e9"/>
<circle cx="1458.9" cy="688.7" r="23" fill="#fff"/>
<g transform="rotate(8 1447 682.6)"><path d="M1450.2 676.6 A6.6 6 0 0 0 1450.2 688.6 Z" fill="#04473a"/></g>
<g transform="rotate(8 1456 684.2)"><path d="M1459.4 678.2 A6.6 6 0 0 0 1459.4 690.2 Z" fill="#04473a"/></g>
<g transform="rotate(-20 1462 694)"><path d="M1454.2 694 A7.9 6.9 0 0 0 1470 694 Z" fill="#12d94c"/></g>
</svg>
<svg style="left:236px;top:376px" width="20" height="46" viewBox="236 376 20 46">
<path d="M243.6 381 Q254.6 382.4 254.6 393.4 V403 Q254.6 414 243.6 415.3 Z" fill="#fff" stroke="#dddddd" stroke-width="1"/>
<rect x="243.6" y="381.5" width="1" height="33.4" fill="#fff"/>
<path d="M249 395 V403 L242.4 399 Z" fill="#0aab3c"/>
</svg>
</div>
</body></html>
